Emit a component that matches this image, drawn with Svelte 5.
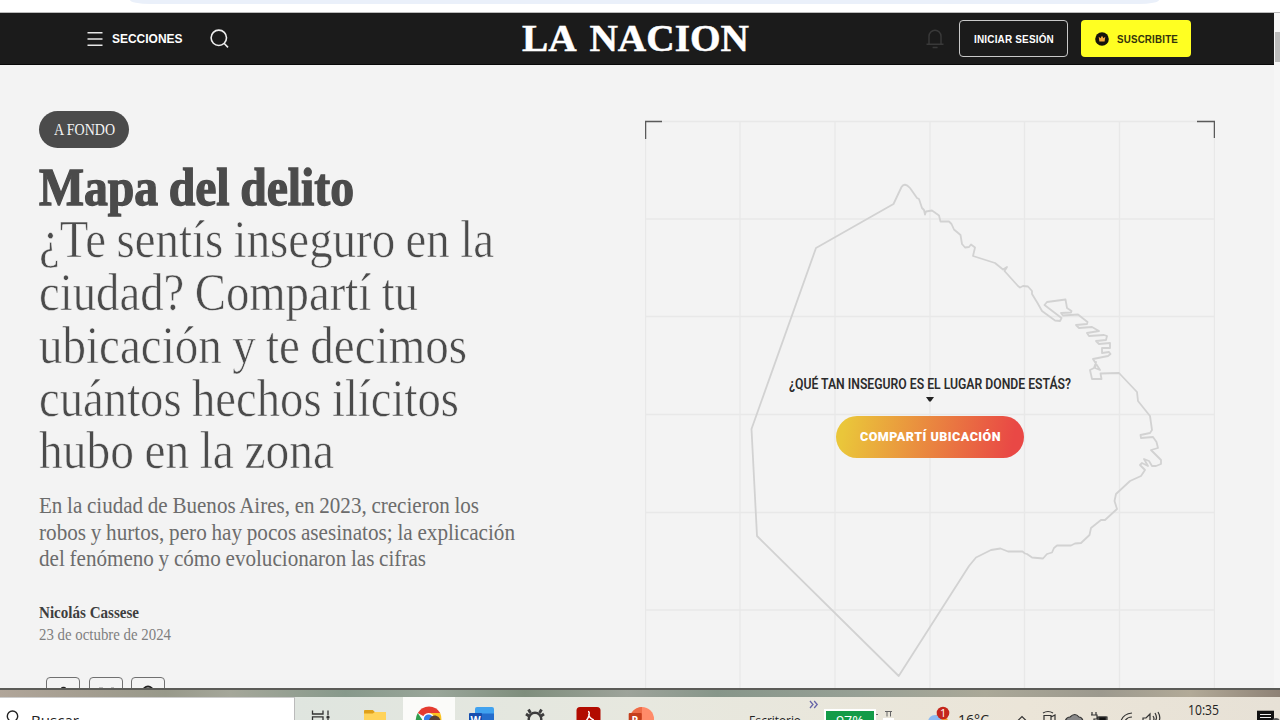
<script>
  const headline = [
    { text: '¿Te sentís inseguro en la', width: 455 },
    { text: 'ciudad? Compartí tu', width: 379 },
    { text: 'ubicación y te decimos', width: 428 },
    { text: 'cuántos hechos ilícitos', width: 420 },
    { text: 'hubo en la zona', width: 295 }
  ];
  const summary = [
    { text: 'En la ciudad de Buenos Aires, en 2023, crecieron los', width: 440 },
    { text: 'robos y hurtos, pero hay pocos asesinatos; la explicación', width: 476 },
    { text: 'del fenómeno y cómo evolucionaron las cifras', width: 387 }
  ];
  const columns = [645.5, 740, 835, 930, 1024.5, 1119.5, 1214.5];
  const rows = [121.5, 219, 316.5, 414.5, 512.5, 610];

  // Condenses or widens a line of text so that it fills the given measure.
  function fit(node, width) {
    const natural = node.getBoundingClientRect().width;
    node.style.transform = `scaleX(${width / natural})`;
    node.style.marginRight = `${width - natural}px`;
  }
</script>

<div class="screen">
  <div class="browser"><div class="address"></div></div>

  <div class="viewport">
    <div class="page">
      <header>
        <div class="menu">
          <svg width="16" height="16" viewBox="0 0 16 16"><path d="M.5 1.8h15M.5 8h15M.5 14.2h15" stroke="#e8e8e8" stroke-width="1.6" /></svg>
          <b><span class="fit" use:fit={70.5}>SECCIONES</span></b>
        </div>
        <svg class="search" width="20" height="20" viewBox="0 0 20 20" fill="none" stroke="#eee" stroke-width="1.6"><circle cx="8.8" cy="8.8" r="7.7" /><path d="m14 14.2 4 4.2" /></svg>
        <div class="logo"><span class="fit" use:fit={227}>LA NACION</span></div>
        <svg class="bell" width="18" height="22" viewBox="0 0 18 22" fill="none" stroke="#393939" stroke-width="1.5"><path d="M.5 16.3h17M3 16V8.2a6 6 0 0 1 12 0V16M6.6 19.5h5" /></svg>
        <button class="login"><span class="fit" use:fit={80}>INICIAR SESIÓN</span></button>
        <button class="subscribe">
          <svg width="14" height="14" viewBox="0 0 14 14"><circle cx="7" cy="7" r="6.8" fill="#16130b" /><path d="m3.7 4.8 1.8 1.5L7 3.8l1.5 2.5 1.8-1.5-.7 4.7H4.4Z" fill="#f5a93a" /></svg>
          <span class="fit" use:fit={61}>SUSCRIBITE</span>
        </button>
      </header>

      <main>
        <article>
          <div class="tag"><span class="fit" use:fit={61}>A FONDO</span></div>
          <h1>
            <strong><span class="fit" use:fit={315}>Mapa del delito</span></strong>
            {#each headline as line}<div><span class="fit" use:fit={line.width}>{line.text}</span></div>{/each}
          </h1>
          <div class="summary">
            {#each summary as line}<div><span class="fit" use:fit={line.width}>{line.text}</span></div>{/each}
          </div>
          <div class="author"><span class="fit" use:fit={100}>Nicolás Cassese</span></div>
          <div class="date"><span class="fit" use:fit={132}>23 de octubre de 2024</span></div>
          <div class="share">
            <button><svg width="34" height="12" viewBox="0 0 34 12"><ellipse cx="17.5" cy="10.5" rx="2.6" ry="1.8" fill="#222" /></svg></button>
            <button><svg width="34" height="12" viewBox="0 0 34 12"><path d="M10 9.5h4M22 9.5h3" stroke="#bbb" /></svg></button>
            <button><svg width="34" height="12" viewBox="0 0 34 12"><circle cx="17" cy="13.5" r="5" fill="none" stroke="#222" stroke-width="1.8" /></svg></button>
          </div>
        </article>

        <section class="map">
          <svg class="city" width="570" height="568" viewBox="645 120 570 568" fill="none">
            <g stroke="#e8e8e8" stroke-width="1.3">
              {#each columns as x}<path d="M{x} 121V688" />{/each}
              {#each rows as y}<path d="M645 {y}H1215" />{/each}
            </g>
            <path stroke="#d2d2d2" stroke-width="1.8" stroke-linejoin="round" d="M816 248 893.5 204 901.5 187Q904.5 182 910 188L917 198 919 199 922 208 924 210 925 214.5 926 211.5 932 210.5 939 215.5 940.5 221.5H949L951.5 224 954 229.5 960.5 235 962 244 965 247.5 969 247 971 244.5 975 247.5 973 256 995 263 1003 269.5 1007 267 1004.5 271 1018 286 1020 287.5 1023 286 1028 286.5 1032 291V294L1037.5 303 1042 311 1055 320.5 1060 321 1061.5 318 1044.5 305 1047 302 1065.5 299.5 1067 308 1071.5 311 1071 312.5 1061 313 1063 315.5 1078 314.5 1087.5 322 1087 324 1076 325 1079 328 1092 327 1099 331 1087 333 1089 336 1104 335 1107 336 1106 340 1096 341 1099 344 1110 343V348H1102V353L1109 352 1110.5 354 1108 356 1093 359 1100 370 1095 368 1096 362 1094 368 1090 370 1092 379H1101.5L1100.5 373.5 1119 373 1137 392 1138 401 1150 416 1152 430 1150 433 1140.5 435 1141 438 1153 437 1156.5 442 1158 448 1151 450 1161 460V464L1156 466H1152L1149 461 1144 459 1148 466 1142 463 1140 465 1145 470 1141 476 1130 481 1116 494 1114.5 501 1117 509 1105 520H1101L1091 528 1089.5 535 1081 543 1075 543.5 1071 545.5H1057L1054 548 1052 552.5 1047 554 1043 558.5 1032 557.5 1027 554 1025 553.5 1022.5 551.5H1008L1000.5 548.5 991 550 976 557.5 969 566 898.7 676 757 536 751.5 429Z" />
            <path stroke="#5a5a5a" stroke-width="1.3" d="M645.6 139V121.5H662M1197 121.5H1214.4V138" />
          </svg>
          <div class="locate">
            <div class="question"><span class="fit" use:fit={282}>¿QUÉ TAN INSEGURO ES EL LUGAR DONDE ESTÁS?</span></div>
            <svg width="8" height="5" viewBox="0 0 8 5"><path d="M0 0h8L4.8 4.5H3.2Z" fill="#222" /></svg>
            <button><span class="fit" use:fit={141}>COMPARTÍ UBICACIÓN</span></button>
          </div>
        </section>
      </main>
    </div>
    <div class="scrollbar"><i></i></div>
  </div>

  <div class="wallpaper"></div>

  <footer>
    <div class="find">
      <svg width="22" height="22" viewBox="0 698 22 22" fill="none" stroke="#222" stroke-width="1.4"><circle cx="12.5" cy="716.2" r="5.2" /><path d="m9 720-3 4" /></svg>
      <span class="fit" use:fit={48}>Buscar</span>
    </div>
    <svg width="53" height="23" viewBox="295 697 53 23" fill="none" stroke="#333" stroke-width="1.3"><path d="M312.5 710.5V714H323V710.5M312.5 721V716.8H323V721M328 710.5V715M328 719V721" /><circle cx="328" cy="717.2" r="1" fill="#111" /></svg>
    <svg width="55" height="23" viewBox="348 697 55 23"><path d="M364 711q0-1 1-1h7l2 2h12v9h-22Z" fill="#ffd35a" /><path d="M364 713.5v-2.3q0-1.2 1.2-1.2h7.6l2 2-2 1.5Z" fill="#dfa01b" /></svg>
    <svg class="active" width="52" height="23" viewBox="403 697 52 23"><path d="M428.5 719 417.8 713a12.8 12.8 0 0 1 22.4 0Z" fill="#e53b30" /><path d="M428.5 713h11.7q1.4 3 1.3 8h-8Z" fill="#fbc322" /><path d="m417.8 713 6 9h-8q-.5-5 2-9Z" fill="#2f9e4e" /><circle cx="428.5" cy="719" r="6" fill="#fff" /><circle cx="428.5" cy="719" r="4.6" fill="#367de8" /><path d="M429 720q2-5 6.5-4.5 4 1 5 5Z" fill="#594235" /></svg>
    <svg width="54" height="23" viewBox="455 697 54 23"><path d="M475 709q0-2 2-2h15q2 0 2 2v5h-19Z" fill="#40a2ef" /><path d="M475 713.5h19v8h-19Z" fill="#246dcc" /><rect x="469" y="713" width="13" height="12" rx="1" fill="#174fae" /><text x="470.5" y="723.5" font-size="10.5" font-weight="700" fill="#fff">W</text></svg>
    <svg width="53" height="23" viewBox="509 697 53 23" fill="none" stroke="#3d3d3d"><circle cx="535" cy="719" r="6.3" stroke-width="2.4" /><path d="m530.5 713-2-3.5M539.5 713l2-3.5M529 716l-3-2M541 716l3-2" stroke-width="2.8" /></svg>
    <svg width="53" height="23" viewBox="562 697 53 23"><rect x="576.5" y="707" width="24" height="25" rx="3.5" fill="#b20b00" /><path d="M588 711.5q2 0 .8 4.5-1 3.5-4 6m4-8q0 4 5 6" fill="none" stroke="#fff" stroke-width="1.4" /></svg>
    <svg width="53" height="23" viewBox="615 697 53 23"><circle cx="642" cy="719" r="12" fill="#ff8b69" /><path d="M642 707a12 12 0 0 0-12 12h12Z" fill="#ed6c47" /><rect x="628.7" y="713" width="13" height="12" rx="1" fill="#c43e1c" /><text x="631.5" y="723.5" font-size="10.5" font-weight="700" fill="#fff">P</text></svg>
    <div class="desk"><span class="fit" use:fit={52}>Escritorio</span></div>
    <svg class="more" width="10" height="14" viewBox="0 0 10 14" fill="none" stroke="#6664a8" stroke-width="1.3"><path d="m1 4 3 3.5L1 11M5.2 4l3 3.5-3 3.5" /></svg>
    <div class="battery"><span class="fit" use:fit={28}>97%</span></div>
    <svg width="45" height="23" viewBox="876 697 45 23" fill="none"><path d="M883 718h11v3h-11Z" fill="#fff" /><path d="M876 714.5h2M885 711.5h7M887 711.5v5M890.5 711.5v5" stroke="#666" /></svg>
    <svg width="32" height="23" viewBox="921 697 32 23"><circle cx="940" cy="722" r="8" fill="#f59a32" /><circle cx="935" cy="722" r="7" fill="#8dbbf3" /><circle cx="943" cy="713" r="6.3" fill="#c4261c" /><text x="939.9" y="717.2" font-size="11" fill="#fff">1</text></svg>
    <div class="temp"><span class="fit" use:fit={31}>16°C</span></div>
    <svg width="192" height="23" viewBox="994 697 192 23" fill="none" stroke="#333" stroke-width="1.2">
      <path d="m1017.5 721 4.5-4.5 4.5 4.5" /><path d="M1043 713q5-3 10 0M1044 720v-4.5h7v5M1051 717l4-2v6" />
      <path d="M1065 722q1-5 5-5 5-5 9 0 3 0 4 4Z" fill="#888" /><path d="M1092 712v3m4-3v3m-5 0h6v4h-3v3m4-5h9v5h-9Z" /><path d="M1099 717h7v4h-7Z" fill="#111" />
      <path d="M1121 721q2-7 11-8m-7 8q2-4 7-4" /><path d="M1143 721v-3h3l4-4v8m3-6q2 3 0 5m2-8q3 5 0 8m3-9q3 5 1 9" />
    </svg>
    <div class="clock"><span class="fit" use:fit={31}>10:35</span></div>
    <svg width="60" height="23" viewBox="1220 697 60 23"><path d="M1257 710.7h17v11h-17Z" fill="#111" /><path d="M1260 714.5h11M1260 717.5h11" stroke="#eee" stroke-width="1.2" /><circle cx="1276" cy="722" r="4" fill="#555" /></svg>
  </footer>
</div>

<style>
  :global(body) { margin: 0; overflow: hidden; }
  .screen { width: 1280px; height: 720px; display: flex; flex-direction: column; overflow: hidden; background: #fff; font-family: "Liberation Sans", Arial, sans-serif; }
  svg { display: block; flex: none; }
  button { box-sizing: border-box; padding: 0; border: 0; font: inherit; }
  .fit { display: inline-block; white-space: nowrap; transform-origin: 0 50%; }

  .browser { flex: none; box-sizing: border-box; height: 13px; border-bottom: 1px solid #bbb; padding: 0 121px 0 130px; }
  .address { height: 4px; background: #eaf0fa; border-radius: 0 0 20px 20px / 0 0 4px 4px; }
  .viewport { flex: none; height: 675px; display: flex; overflow: hidden; }
  .page { width: 1274px; background: #f3f3f3; }
  .scrollbar { flex: 1; background: #f6f6f6; padding: 19px 0 0 1px; }
  .scrollbar i { display: block; height: 30px; background: #bdbdbd; }

  header { box-sizing: border-box; height: 51.5px; padding: 1px 83px 0 87px; background: #1b1b1b; border-bottom: 1px solid #080808; color: #fff; display: flex; align-items: center; }
  .menu { display: flex; align-items: center; gap: 9px; width: 123px; font-size: 12.5px; }
  .search { margin-top: 0; }
  .logo { width: 230px; margin: -2px 0 0 292px; font: 700 38.5px/48px "Liberation Serif", serif; word-spacing: 5px; white-space: nowrap; -webkit-text-stroke: .5px #fff; }
  .bell { margin: 1px 15px 0 auto; }
  .login, .subscribe { height: 37px; border-radius: 4px; font-weight: 700; font-size: 10.5px; letter-spacing: .2px; display: flex; align-items: center; justify-content: center; }
  .login { width: 109px; border: 1px solid #c9c9c9; background: transparent; color: #fff; margin-right: 13px; }
  .subscribe { width: 110px; background: #ffff22; color: #33330c; gap: 8px; }

  main { display: flex; height: 623.5px; color: #4b4b4b; font-family: "Liberation Serif", serif; }
  article { flex: none; width: 645px; padding: 46.5px 0 0 39px; box-sizing: border-box; }
  .tag { width: 90px; height: 37px; border-radius: 18.5px; background: #4b4b4b; color: #f4f4f4; display: flex; align-items: center; justify-content: center; font-size: 16px; }
  h1 { margin: 13.5px 0 15px; font-size: 52px; line-height: 52.8px; font-weight: 400; word-spacing: -1.5px; -webkit-text-stroke: .6px #f3f3f3; }
  h1 div { height: 52.8px; }
  h1 strong { display: block; height: 52.8px; font-weight: 700; -webkit-text-stroke: 1.3px #4b4b4b; }
  .summary { font-size: 23px; line-height: 26.3px; color: #6c6c6c; word-spacing: -.6px; }
  .summary div { height: 26.3px; }
  .author { margin-top: 30px; height: 22px; font-size: 16.5px; line-height: 22px; font-weight: 700; color: #3e3e3e; }
  .date { height: 22px; font-size: 16.5px; line-height: 22px; color: #7f7f7f; }
  .share { display: flex; gap: 8.5px; margin: 30.5px 0 0 7px; }
  .share button { width: 34px; height: 34px; border: 1px solid #707070; border-radius: 4px; background: transparent; display: flex; justify-content: center; }

  .map { flex: none; width: 570px; display: grid; margin-top: 55.5px; height: 568px; }
  .city, .locate { grid-area: 1 / 1; }
  .locate { display: flex; flex-direction: column; align-items: center; padding-top: 254px; font-family: Roboto, sans-serif; z-index: 1; }
  .question { height: 20px; line-height: 20px; font-size: 14px; font-weight: 600; color: #2c2c2c; margin-bottom: 3px; }
  .locate button { width: 188px; height: 42px; margin-top: 14px; padding-bottom: 1px; border-radius: 21px; background: linear-gradient(100deg, #eac63a 5%, #e94845 93%); color: #fff; font-size: 13px; font-weight: 900; letter-spacing: .5px; }

  .wallpaper { flex: none; box-sizing: border-box; height: 9px; border-top: 2px solid #5b5b57; background: linear-gradient(90deg, #b0a599, #a39d90 7%, #98998a 13%, #a5a79a 18%, #87998b 27%, #9aa69a 34%, #7f8e7d 41%, #9da39a 49%, #87968a 56%, #97a095 67%, #aaa898 77%, #9c998e 86%, #b2aa98 93%, #8e8276); }
  footer { flex: none; height: 23px; display: flex; overflow: hidden; background: linear-gradient(90deg, #dfe5df 23%, #e7e8df 50%, #ebe5d8 80%, #e7e1d6); font: 14px/20px "Open Sans", sans-serif; color: #222; }
  .find { flex: none; box-sizing: border-box; width: 295px; height: 23px; border-right: 1px solid #bbb; border-top: 1px solid #ccc; background: #fff; display: flex; gap: 9px; }
  .find span, .desk span, .temp span { margin-top: 13px; }
  .active { background: #fbfbf9; }
  .desk { flex: none; width: 52px; margin-left: 81px; font-size: 13px; }
  .more { margin-left: 8px; }
  .battery { flex: none; box-sizing: border-box; width: 52px; height: 26px; margin: 12px 0 0 5px; border: 2px solid #fff; background: #139b48; color: #fff; text-align: center; line-height: 19px; }
  .temp { flex: none; width: 36px; margin-left: 5px; }
  .clock { flex: none; width: 32px; margin-left: 2px; padding-top: 3px; }
</style>
